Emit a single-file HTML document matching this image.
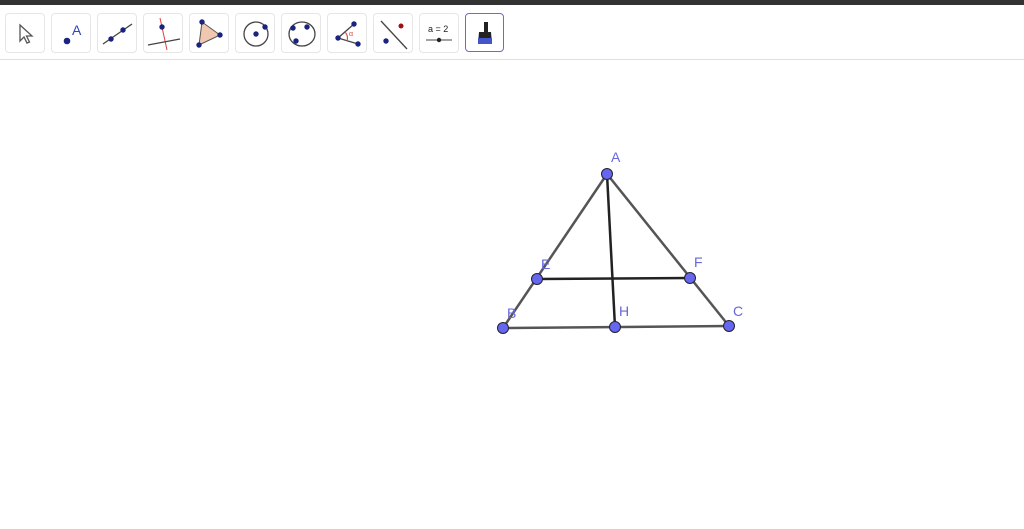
<!DOCTYPE html><html><head><style>
body{margin:0;width:1024px;height:529px;background:#fff;overflow:hidden;font-family:"Liberation Sans",sans-serif;position:relative}
.top{position:absolute;left:0;top:0;width:1024px;height:5px;background:#333}
.bar{position:absolute;left:0;top:59px;width:1024px;height:1px;background:#e0e0e0}
.b{position:absolute;top:13px;width:38px;height:38px;border:1px solid #e6e6e6;border-radius:4px;background:#fff}
.b svg{width:38px;height:38px}
</style></head><body>
<div class="top"></div>
<div class="b" style="left:5px"><svg viewBox="0 0 38 38"><path d="M14 11 L14 27 L18 23 L21 29 L23.5 28 L20.5 22 L26 22 Z" fill="#fff" stroke="#555" stroke-width="1.3"/></svg></div>
<div class="b" style="left:51px"><svg viewBox="0 0 38 38"><circle cx="15" cy="27" r="3.3" fill="#1a237e"/><text x="20" y="21" font-size="14" fill="#3344bb">A</text></svg></div>
<div class="b" style="left:97px"><svg viewBox="0 0 38 38"><line x1="5" y1="30" x2="34" y2="10" stroke="#444" stroke-width="1.3"/><circle cx="13" cy="25" r="2.7" fill="#1a237e"/><circle cx="25" cy="16" r="2.7" fill="#1a237e"/></svg></div>
<div class="b" style="left:143px"><svg viewBox="0 0 38 38"><line x1="16" y1="4" x2="23" y2="36" stroke="#d44" stroke-width="1"/><line x1="4" y1="31" x2="36" y2="25" stroke="#444" stroke-width="1.3"/><circle cx="18" cy="13" r="2.7" fill="#1a237e"/></svg></div>
<div class="b" style="left:189px"><svg viewBox="0 0 38 38"><path d="M12 8 L30 21 L9 31 Z" fill="#f0c8b0" stroke="#555" stroke-width="1"/><circle cx="12" cy="8" r="2.7" fill="#1a237e"/><circle cx="30" cy="21" r="2.7" fill="#1a237e"/><circle cx="9" cy="31" r="2.7" fill="#1a237e"/></svg></div>
<div class="b" style="left:235px"><svg viewBox="0 0 38 38"><circle cx="20" cy="20" r="12" fill="none" stroke="#444" stroke-width="1.3"/><circle cx="20" cy="20" r="2.7" fill="#1a237e"/><circle cx="29" cy="13" r="2.7" fill="#1a237e"/></svg></div>
<div class="b" style="left:281px"><svg viewBox="0 0 38 38"><ellipse cx="20" cy="20" rx="13" ry="12" fill="none" stroke="#444" stroke-width="1.3"/><circle cx="11" cy="14" r="2.7" fill="#1a237e"/><circle cx="25" cy="13" r="2.7" fill="#1a237e"/><circle cx="14" cy="27" r="2.7" fill="#1a237e"/></svg></div>
<div class="b" style="left:327px"><svg viewBox="0 0 38 38"><path d="M26 10 L10 24 L30 30" fill="none" stroke="#444" stroke-width="1.3"/><path d="M17 18 A8 8 0 0 1 19 27" fill="#f8d8d8" stroke="#d44"/><text x="21" y="22" font-size="7" fill="#d44">α</text><circle cx="26" cy="10" r="2.7" fill="#1a237e"/><circle cx="10" cy="24" r="2.7" fill="#1a237e"/><circle cx="30" cy="30" r="2.7" fill="#1a237e"/></svg></div>
<div class="b" style="left:373px"><svg viewBox="0 0 38 38"><line x1="7" y1="7" x2="33" y2="35" stroke="#444" stroke-width="1.3"/><circle cx="27" cy="12" r="2.5" fill="#a01010"/><circle cx="12" cy="27" r="2.7" fill="#1a237e"/></svg></div>
<div class="b" style="left:419px"><svg viewBox="0 0 38 38"><text x="8" y="18" font-size="9" fill="#222">a = 2</text><line x1="6" y1="26" x2="32" y2="26" stroke="#444"/><circle cx="19" cy="26" r="2.2" fill="#222"/></svg></div>
<div class="b" style="left:465px;border:1.5px solid #6670c8;width:37px;height:37px"><svg viewBox="0 0 38 38"><rect x="18" y="8" width="4" height="10" fill="#222"/><path d="M13 18 L25 18 L26 30 L12 30 Z" fill="#222"/><path d="M12 24 L26 24 L26 30 L12 30 Z" fill="#4455cc"/></svg></div>
<div class="bar"></div>
<svg style="position:absolute;left:0;top:0" width="1024" height="529">
<g stroke="#555" stroke-width="2.5" fill="none">
<line x1="607" y1="174" x2="503" y2="328"/><line x1="607" y1="174" x2="729" y2="326"/><line x1="503" y1="328" x2="729" y2="326"/></g>
<g stroke="#222" stroke-width="2.5"><line x1="537" y1="279" x2="690" y2="278"/><line x1="607" y1="174" x2="615" y2="327"/></g>
<g fill="#6666ee" stroke="#222233" stroke-width="1">
<circle cx="607" cy="174" r="5.5"/><circle cx="537" cy="279" r="5.5"/><circle cx="690" cy="278" r="5.5"/><circle cx="503" cy="328" r="5.5"/><circle cx="615" cy="327" r="5.5"/><circle cx="729" cy="326" r="5.5"/></g>
<g fill="#6666dd" font-size="14" font-family="Liberation Sans">
<text x="611" y="162">A</text><text x="541" y="269">E</text><text x="694" y="267">F</text><text x="507" y="318">B</text><text x="619" y="316">H</text><text x="733" y="316">C</text></g>
</svg>
</body></html>
